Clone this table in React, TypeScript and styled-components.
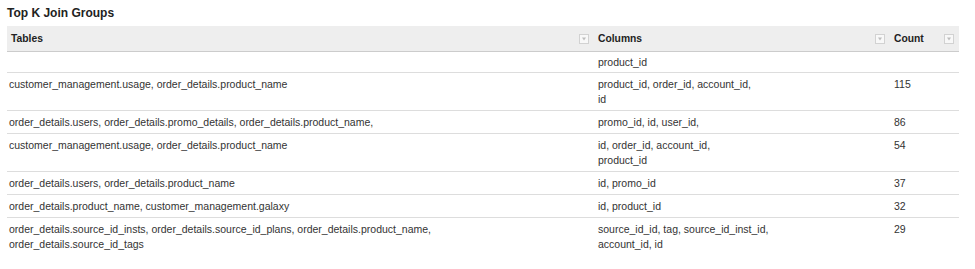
import React from "react"
import styled, { createGlobalStyle } from 'styled-components'

const GlobalStyle = createGlobalStyle`
    body {
        margin: 0;
        background: #ffffff;
        font-family: "Liberation Sans", Arial, Helvetica, sans-serif;
        color: #333333;
    }
`

const Wrapper = styled.div`
    padding: 5px 16px 0 7px;
    width: 952px;
`

const Title = styled.h3`
    margin: 0 0 5px 0;
    font-size: 12px;
    line-height: 16px;
    font-weight: bold;
    color: #222222;
`

const Table = styled.div`
    display: grid;
    grid-template-columns: 587px 296px 69px;
`

const HeadCell = styled.div`
    display: flex;
    align-items: center;
    justify-content: space-between;
    height: 25px;
    padding: 0 5px 0 4px;
    background-color: #eeeeee;
    border-bottom: 1px solid #cccccc;
    font-size: 10.3px;
    font-weight: bold;
    color: #222222;
`

const FilterButton = styled.span`
    display: flex;
    align-items: center;
    justify-content: center;
    width: 10px;
    height: 10px;
    box-sizing: border-box;
    border: 1px solid #d2d2d2;
    background: #f8f8f8;
`

const Row = styled.div<{ $last?: boolean }>`
    display: contents;
    & > div {
        border-bottom: ${p => p.$last ? 'none' : '1px solid #dddddd'};
    }
`

const Cell = styled.div<{ $clipped?: boolean }>`
    padding: ${p => p.$clipped ? '3px 4px 2px 4px' : '4px 4px 3px 4px'};
    font-size: 10.5px;
    line-height: 15px;
    color: #333333;
`

const TextCell = styled(Cell)`
    padding-left: 2px;
`

const Filter = () => (
    <FilterButton>
        <svg width="6" height="6" viewBox="0 0 6 6">
            <path d="M1 1.5 L5 1.5 L3 4.5 Z" fill="#bdbdbd"/>
        </svg>
    </FilterButton>
)

const rows: { tables: string, columns: React.ReactNode, count: string }[] = [
    { tables: 'customer_management.usage, order_details.product_name', columns: <>product_id, order_id, account_id,<br/>id</>, count: '115' },
    { tables: 'order_details.users, order_details.promo_details, order_details.product_name,', columns: 'promo_id, id, user_id,', count: '86' },
    { tables: 'customer_management.usage, order_details.product_name', columns: <>id, order_id, account_id,<br/>product_id</>, count: '54' },
    { tables: 'order_details.users, order_details.product_name', columns: 'id, promo_id', count: '37' },
    { tables: 'order_details.product_name, customer_management.galaxy', columns: 'id, product_id', count: '32' },
    { tables: 'order_details.source_id_insts, order_details.source_id_plans, order_details.product_name,', columns: <>source_id_id, tag, source_id_inst_id,<br/>account_id, id</>, count: '29' },
]

export default function App() {
    return(
        <Wrapper>
            <GlobalStyle/>
            <Title>Top K Join Groups</Title>
            <Table>
                <HeadCell>Tables<Filter/></HeadCell>
                <HeadCell>Columns<Filter/></HeadCell>
                <HeadCell>Count<Filter/></HeadCell>

                <Row>
                    <TextCell $clipped></TextCell>
                    <Cell $clipped>product_id</Cell>
                    <Cell $clipped></Cell>
                </Row>
                {rows.map((r, i) => (
                    <Row key = {i} $last = {i === rows.length - 1}>
                        <TextCell>
                            {r.tables}
                            {i === rows.length - 1 && <><br/>order_details.source_id_tags</>}
                        </TextCell>
                        <Cell>{r.columns}</Cell>
                        <Cell>{r.count}</Cell>
                    </Row>
                ))}
            </Table>
        </Wrapper>
    )
}
